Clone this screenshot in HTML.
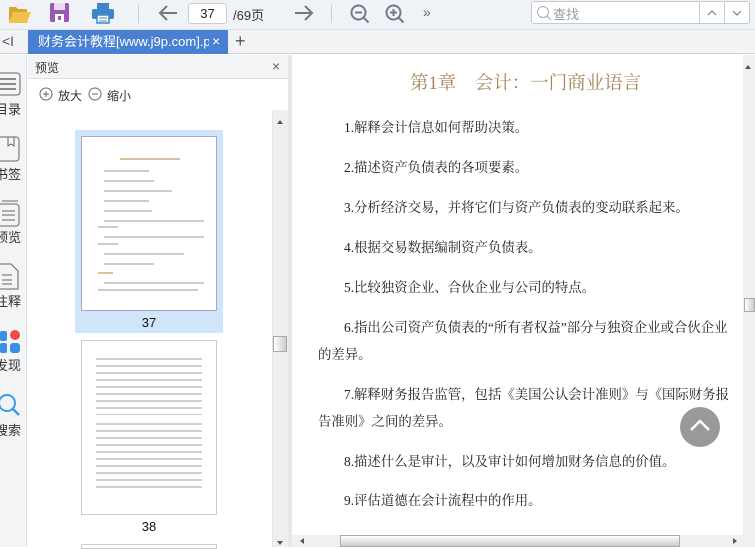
<!DOCTYPE html>
<html><head><meta charset="utf-8"><style>
*{margin:0;padding:0;box-sizing:border-box}
body{width:755px;height:547px;overflow:hidden;background:#fff;font-family:"Liberation Sans","Noto Sans CJK SC",sans-serif;position:relative;font-size:12px;color:#333}
.a{position:absolute}
.serif{font-family:"Liberation Serif","Noto Serif CJK SC",serif}
.p{position:absolute;left:344px;font-size:13.4px;color:#222;font-family:"Liberation Serif","Noto Serif CJK SC",serif;white-space:nowrap}
.l{height:2px;background:#ccc;position:absolute}
</style></head><body>
<!-- toolbar -->
<div class="a" style="left:0;top:0;width:755px;height:30px;background:#eff3f8;border-bottom:1px solid #dde3ea"></div>
<svg class="a" style="left:8px;top:3px" width="24" height="22"><path d="M1 4h7l2 2h9v3H6L1 19z" fill="#d9a531"/><path d="M5 9h18l-4 11H1z" fill="#f0c24c"/></svg>
<svg class="a" style="left:50px;top:3px" width="20" height="20"><rect x="0" y="0" width="19" height="19" rx="2" fill="#9b59b6"/><rect x="4" y="0" width="11" height="7" fill="#e8daef"/><rect x="5" y="11" width="9" height="8" fill="#fff"/><rect x="8" y="13" width="3" height="4" fill="#9b59b6"/></svg>
<svg class="a" style="left:92px;top:3px" width="22" height="21"><rect x="5" y="0" width="12" height="6" fill="#3e86c8"/><rect x="0" y="6" width="22" height="10" rx="2" fill="#3e86c8"/><rect x="5" y="12" width="12" height="8" fill="#fff" stroke="#3e86c8" stroke-width="1.5"/><line x1="7" y1="15" x2="15" y2="15" stroke="#3e86c8"/><line x1="7" y1="18" x2="15" y2="18" stroke="#3e86c8"/></svg>
<div class="a" style="left:138px;top:5px;width:1px;height:18px;background:#ccd"></div>
<svg class="a" style="left:157px;top:4px" width="22" height="18"><path d="M20 9H3M10 2L3 9l7 7" stroke="#777" stroke-width="2" fill="none"/></svg>
<div class="a" style="left:188px;top:3px;width:39px;height:21px;background:#fff;border:1px solid #c8cdd4;border-radius:3px;font-size:13px;text-align:center;line-height:19px;color:#222">37</div>
<div class="a" style="left:233px;top:5px;font-size:13px;color:#333">/69页</div>
<svg class="a" style="left:293px;top:4px" width="22" height="18"><path d="M2 9h17M12 2l7 7-7 7" stroke="#777" stroke-width="2" fill="none"/></svg>
<div class="a" style="left:331px;top:5px;width:1px;height:18px;background:#ccd"></div>
<svg class="a" style="left:350px;top:4px" width="22" height="22"><circle cx="8.5" cy="8.5" r="7" stroke="#778" stroke-width="2" fill="none"/><path d="M5 8.5h7M13.5 13.5l5 5" stroke="#778" stroke-width="2"/></svg>
<svg class="a" style="left:385px;top:4px" width="22" height="22"><circle cx="8.5" cy="8.5" r="7" stroke="#778" stroke-width="2" fill="none"/><path d="M5 8.5h7M8.5 5v7M13.5 13.5l5 5" stroke="#778" stroke-width="2"/></svg>
<div class="a" style="left:423px;top:4px;font-size:14px;color:#666">»</div>
<div class="a" style="left:531px;top:1px;width:219px;height:23px;background:#fff;border:1px solid #c4c9d0;border-radius:3px"></div>
<svg class="a" style="left:536px;top:5px" width="16" height="16"><circle cx="7" cy="7" r="5.5" stroke="#aaa" fill="none"/><path d="M11 11l4 4" stroke="#aaa"/></svg>
<div class="a" style="left:553px;top:4px;font-size:13px;color:#999">查找</div>
<div class="a" style="left:699px;top:1px;width:1px;height:23px;background:#c4c9d0"></div>
<div class="a" style="left:724px;top:1px;width:1px;height:23px;background:#c4c9d0"></div>
<svg class="a" style="left:706px;top:9px" width="12" height="8"><path d="M2 6l4-4 4 4" stroke="#777" fill="none"/></svg>
<svg class="a" style="left:731px;top:9px" width="12" height="8"><path d="M2 2l4 4 4-4" stroke="#777" fill="none"/></svg>
<!-- tab bar -->
<div class="a" style="left:0;top:30px;width:755px;height:24px;background:#f2f3f5;border-bottom:1px solid #d0d4d9"></div>
<div class="a" style="left:2px;top:33px;font-size:14px;color:#556">&lt;I</div>
<div class="a" style="left:28px;top:30px;width:200px;height:24px;background:#4a80d2;color:#fff;font-size:13px;line-height:24px;padding-left:10px;white-space:nowrap;overflow:hidden">财务会计教程[www.j9p.com].p<span style="opacity:.5">d</span></div>
<div class="a" style="left:209px;top:33px;color:#fff;font-size:14px;background:#4a80d2;padding:0 3px">×</div>
<div class="a" style="left:235px;top:31px;color:#555;font-size:18px">+</div>
<!-- left strip -->
<div class="a" style="left:0;top:55px;width:27px;height:492px;background:#f3f4f6;border-right:1px solid #dcdfe3"></div>
<svg class="a" style="left:0;top:72px" width="22" height="26"><rect x="-4" y="1" width="24" height="22" rx="3" stroke="#666" fill="none"/><path d="M0 7h16M0 12h16M0 17h16" stroke="#666" stroke-width="1.5"/></svg>
<div class="a" style="left:-5px;top:99px;font-size:13px">目录</div>
<svg class="a" style="left:0;top:136px" width="22" height="26"><rect x="-4" y="1" width="23" height="24" rx="3" stroke="#666" fill="none"/><path d="M8 1v9l3-2 3 2V1" stroke="#666" fill="none"/></svg>
<div class="a" style="left:-5px;top:164px;font-size:13px">书签</div>
<svg class="a" style="left:0;top:200px" width="22" height="30"><rect x="-4" y="4" width="23" height="22" rx="3" stroke="#666" fill="none"/><path d="M2 1h16M2 11h13M2 15h13M2 20h13" stroke="#666"/></svg>
<div class="a" style="left:-5px;top:227px;font-size:13px">预览</div>
<svg class="a" style="left:0;top:263px" width="22" height="28"><path d="M-3 1h14l7 7v18H-3z" stroke="#666" fill="none"/><path d="M2 12h10M2 17h10M2 21h10" stroke="#666"/></svg>
<div class="a" style="left:-5px;top:291px;font-size:13px">注释</div>
<div class="a" style="left:0;top:331px;width:7px;height:10px;background:#3a8ee6;border-radius:2px"></div>
<div class="a" style="left:10px;top:330px;width:10px;height:10px;background:#f04a4a;border-radius:50%"></div>
<div class="a" style="left:0;top:343px;width:7px;height:10px;background:#3a8ee6;border-radius:2px"></div>
<div class="a" style="left:10px;top:343px;width:10px;height:10px;background:#3a8ee6;border-radius:3px"></div>
<div class="a" style="left:-5px;top:355px;font-size:13px">发现</div>
<svg class="a" style="left:0;top:393px" width="22" height="28"><circle cx="7" cy="10" r="8" stroke="#3a9ee6" stroke-width="2" fill="none"/><path d="M13 16l6 6" stroke="#3a9ee6" stroke-width="2.5"/></svg>
<div class="a" style="left:-5px;top:420px;font-size:13px">搜索</div>
<!-- preview panel -->
<div class="a" style="left:28px;top:55px;width:260px;height:24px;background:#f3f4f6;border-bottom:1px solid #dcdfe3"></div>
<div class="a" style="left:35px;top:59px;font-size:12px">预览</div>
<div class="a" style="left:272px;top:58px;font-size:14px;color:#666">×</div>
<svg class="a" style="left:39px;top:87px" width="14" height="14"><circle cx="7" cy="7" r="6" stroke="#666" fill="none"/><path d="M4 7h6M7 4v6" stroke="#666"/></svg>
<div class="a" style="left:58px;top:87px;font-size:12px">放大</div>
<svg class="a" style="left:88px;top:87px" width="14" height="14"><circle cx="7" cy="7" r="6" stroke="#666" fill="none"/><path d="M4 7h6" stroke="#666"/></svg>
<div class="a" style="left:107px;top:87px;font-size:12px">缩小</div>
<div class="a" style="left:75px;top:130px;width:148px;height:203px;background:#cfe5fa"></div>
<div class="a" style="left:81px;top:136px;width:136px;height:175px;background:#fff;border:1px solid #aab"></div>
<div class="a" style="left:120px;top:158px;width:60px;height:2px;background:#d8c0a0"></div>
<div class="l" style="left:104px;top:170px;width:45px"></div><div class="l" style="left:104px;top:180px;width:50px"></div><div class="l" style="left:104px;top:190px;width:68px"></div><div class="l" style="left:104px;top:200px;width:45px"></div><div class="l" style="left:104px;top:210px;width:48px"></div><div class="l" style="left:104px;top:220px;width:100px"></div><div class="l" style="left:98px;top:226px;width:20px"></div><div class="l" style="left:104px;top:236px;width:100px"></div><div class="l" style="left:98px;top:243px;width:20px"></div><div class="l" style="left:104px;top:253px;width:80px"></div><div class="l" style="left:104px;top:263px;width:50px"></div><div class="a" style="left:98px;top:272px;width:15px;height:2px;background:#e0c090"></div><div class="l" style="left:104px;top:282px;width:100px"></div><div class="l" style="left:98px;top:289px;width:100px"></div>
<div class="a" style="left:75px;top:315px;width:148px;text-align:center;font-size:13px;color:#111">37</div>
<div class="a" style="left:81px;top:340px;width:136px;height:175px;background:#fff;border:1px solid #ccc"></div>
<div class="a" style="left:96px;top:355px;width:106px;height:60px;background:repeating-linear-gradient(#fff 0 3px,#d0d0d0 3px 5px,#fff 5px 7px)"></div>
<div class="a" style="left:96px;top:420px;width:106px;height:70px;background:repeating-linear-gradient(#fff 0 3px,#d0d0d0 3px 5px,#fff 5px 7px)"></div>
<div class="a" style="left:75px;top:519px;width:148px;text-align:center;font-size:13px;color:#111">38</div>
<div class="a" style="left:81px;top:544px;width:136px;height:5px;border:1px solid #ccc"></div>
<!-- preview scrollbar -->
<div class="a" style="left:272px;top:110px;width:16px;height:437px;background:#efefef;border-left:1px solid #e4e4e4"></div>
<div class="a" style="left:277px;top:117px;border:3px solid transparent;border-bottom:4px solid #555"></div>
<div class="a" style="left:273px;top:336px;width:14px;height:16px;background:linear-gradient(90deg,#fff,#ccc);border:1px solid #aaa"></div>
<div class="a" style="left:277px;top:541px;border:3px solid transparent;border-top:4px solid #555"></div>
<div class="a" style="left:288px;top:55px;width:4px;height:492px;background:#e6e7e9"></div>
<!-- document -->
<div class="a serif" style="left:410px;top:69px;font-size:18.5px;color:#a88458;white-space:nowrap">第1章　会计：一门商业语言</div>
<div class="p" style="top:117px">1.解释会计信息如何帮助决策。</div>
<div class="p" style="top:157px">2.描述资产负债表的各项要素。</div>
<div class="p" style="top:197px">3.分析经济交易，并将它们与资产负债表的变动联系起来。</div>
<div class="p" style="top:237px">4.根据交易数据编制资产负债表。</div>
<div class="p" style="top:277px">5.比较独资企业、合伙企业与公司的特点。</div>
<div class="p" style="top:317px">6.指出公司资产负债表的“所有者权益”部分与独资企业或合伙企业</div>
<div class="p" style="top:344px;left:318px">的差异。</div>
<div class="p" style="top:384px">7.解释财务报告监管，包括《美国公认会计准则》与《国际财务报</div>
<div class="p" style="top:411px;left:318px">告准则》之间的差异。</div>
<div class="p" style="top:451px">8.描述什么是审计，以及审计如何增加财务信息的价值。</div>
<div class="p" style="top:490px">9.评估道德在会计流程中的作用。</div>
<div class="a" style="left:680px;top:407px;width:40px;height:40px;border-radius:50%;background:#999"></div>
<svg class="a" style="left:688px;top:417px" width="24" height="16"><path d="M3 13l9-9 9 9" stroke="#fff" stroke-width="2.5" fill="none"/></svg>
<!-- doc scrollbars -->
<div class="a" style="left:743px;top:55px;width:12px;height:480px;background:#f0f0f0"></div>
<div class="a" style="left:745px;top:62px;border:3px solid transparent;border-bottom:4px solid #555"></div>
<div class="a" style="left:744px;top:298px;width:11px;height:14px;background:linear-gradient(90deg,#fff,#ccc);border:1px solid #aaa"></div>
<div class="a" style="left:292px;top:535px;width:463px;height:12px;background:#f0f0f0"></div>
<div class="a" style="left:297px;top:538px;border:3px solid transparent;border-right:4px solid #555"></div>
<div class="a" style="left:340px;top:535px;width:340px;height:12px;background:linear-gradient(#fff,#ccc);border:1px solid #aaa"></div>
<div class="a" style="left:733px;top:538px;border:3px solid transparent;border-left:4px solid #555"></div>
</body></html>
